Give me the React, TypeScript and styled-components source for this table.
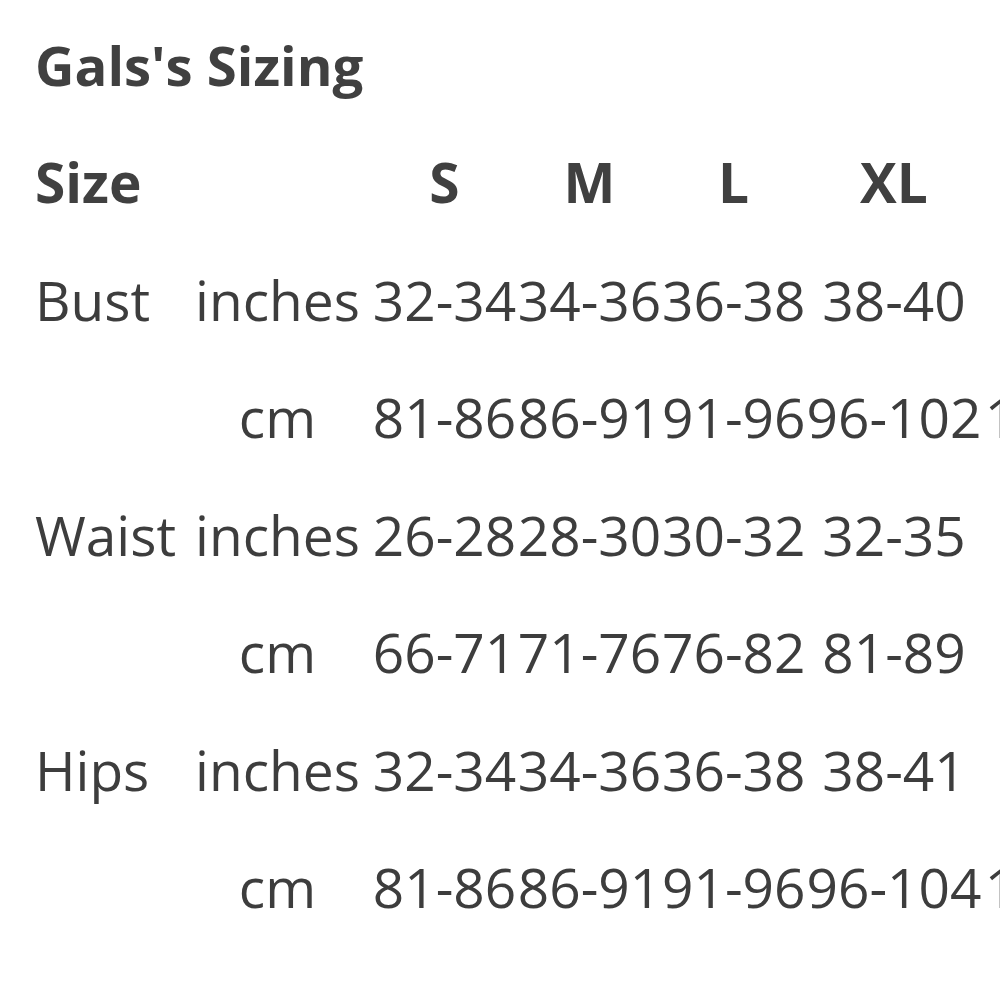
import React from "react";
import styled, { createGlobalStyle } from "styled-components";

const GlobalStyle = createGlobalStyle`
  html, body {
    margin: 0;
    padding: 0;
    background: #ffffff;
    overflow: hidden;
  }
  body {
    font-family: "Open Sans", "DejaVu Sans", sans-serif;
    color: #3d3d3d;
  }
`;

const Page = styled.div`
  width: 1000px;
  height: 1000px;
  overflow: hidden;
  padding: 8px 0 0 33px;
  box-sizing: border-box;
`;

const Title = styled.h2`
  margin: 0 0 0 2px;
  font-size: 54.5px;
  font-weight: 700;
  line-height: 115px;
  white-space: nowrap;
  color: #404040;
`;

const Table = styled.div`
  display: grid;
  grid-template-columns: 162px 177px 145px 145px 143px 178px 210px;
  grid-auto-rows: 117.5px;
  width: max-content;
`;

const Cell = styled.div<{ $head?: boolean; $align?: "left" | "center" }>`
  font-size: 55px;
  line-height: 117.5px;
  font-weight: ${(p) => (p.$head ? 700 : 400)};
  text-align: ${(p) => p.$align ?? "center"};
  padding-left: ${(p) => (p.$align === "left" ? "2px" : "0")};
  white-space: nowrap;
  color: ${(p) => (p.$head ? "#404040" : "#3d3d3d")};
`;

const UnitCell = styled(Cell)`
  padding-right: 12px;
`;

type Row = { label: string; unit: string; values: string[] };

const sizes = ["S", "M", "L", "XL", "XXL"];

const rows: Row[] = [
  { label: "Bust", unit: "inches", values: ["32-34", "34-36", "36-38", "38-40", "40-42"] },
  { label: "", unit: "cm", values: ["81-86", "86-91", "91-96", "96-102", "102-107"] },
  { label: "Waist", unit: "inches", values: ["26-28", "28-30", "30-32", "32-35", "35-38"] },
  { label: "", unit: "cm", values: ["66-71", "71-76", "76-82", "81-89", "89-97"] },
  { label: "Hips", unit: "inches", values: ["32-34", "34-36", "36-38", "38-41", "41-44"] },
  { label: "", unit: "cm", values: ["81-86", "86-91", "91-96", "96-104", "104-112"] },
];

export default function App() {
  return (
    <>
      <GlobalStyle />
      <Page>
        <Title>Gals's Sizing</Title>
        <Table>
          <Cell $head $align="left">Size</Cell>
          <UnitCell />
          {sizes.map((s) => (
            <Cell key={s} $head>
              {s}
            </Cell>
          ))}
          {rows.map((r, i) => (
            <React.Fragment key={i}>
              <Cell $align="left">{r.label}</Cell>
              <UnitCell>{r.unit}</UnitCell>
              {r.values.map((v, j) => (
                <Cell key={j}>{v}</Cell>
              ))}
            </React.Fragment>
          ))}
        </Table>
      </Page>
    </>
  );
}
